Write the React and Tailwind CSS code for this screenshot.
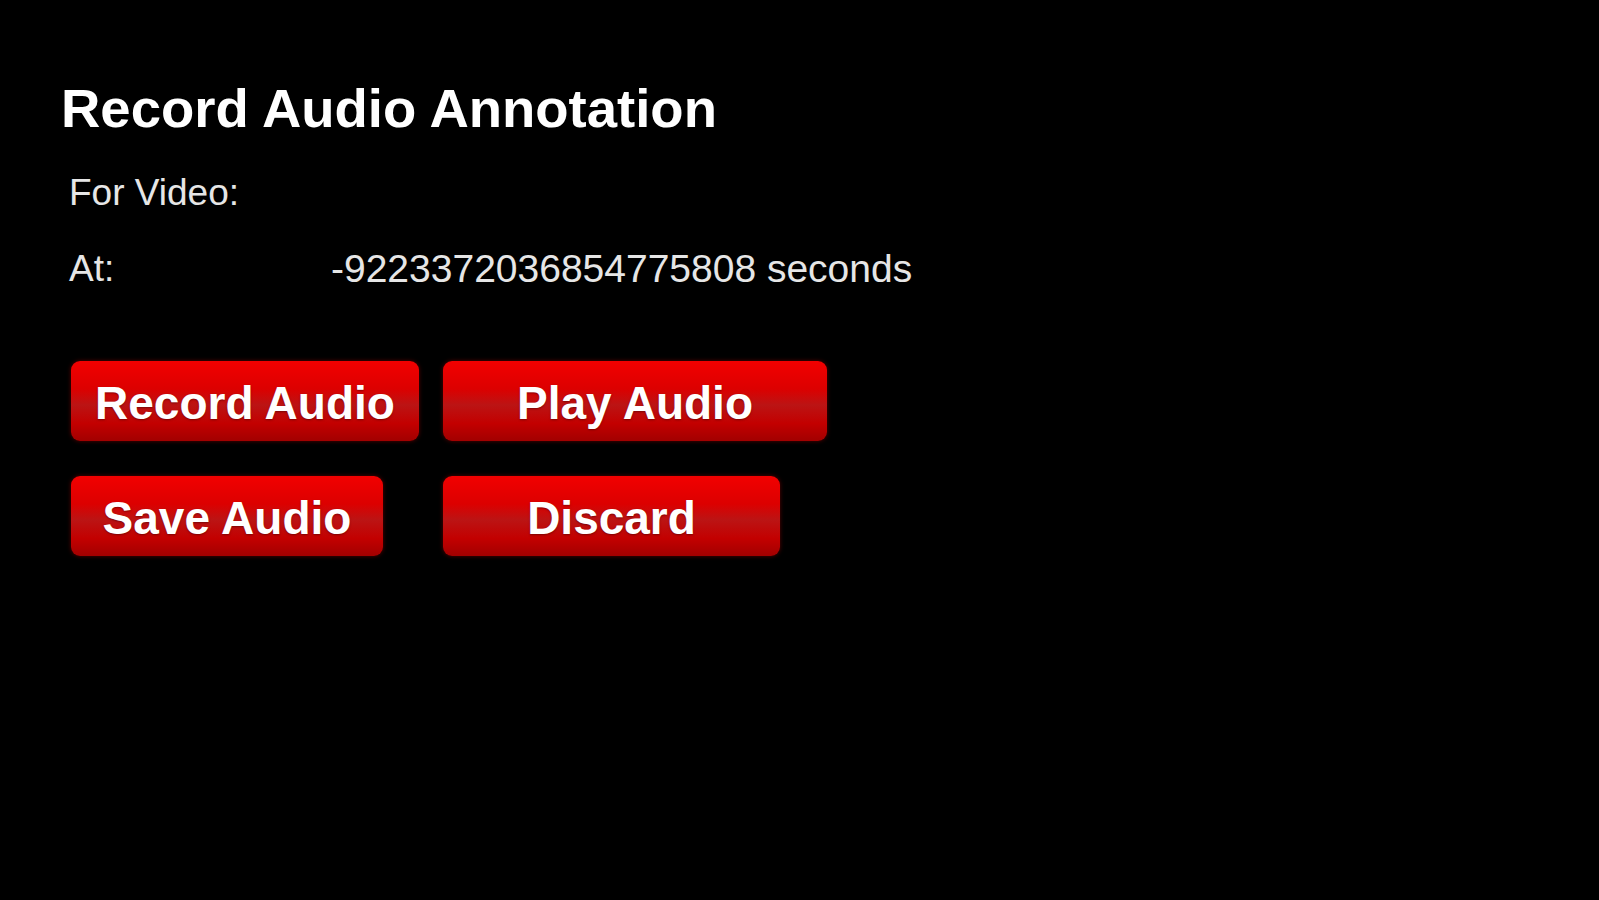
import React from "react";

const RedButton = ({ label, width }) => (
  <button
    className={`h-[80px] pt-[5px] rounded-[9px] text-white font-bold text-[46px] leading-none bg-[linear-gradient(180deg,#f20000_0%,#dc0000_35%,#bb1414_55%,#c30000_78%,#a20000_100%)] shadow-[0_0_4px_rgba(255,0,0,0.35)] [text-shadow:0_1px_2px_rgba(80,0,0,0.6)] ${width}`}
  >
    {label}
  </button>
);

export default function App() {
  return (
    <div className="min-h-[900px] w-full bg-black text-white font-['Liberation_Sans',Arial,sans-serif] pt-[82px] pl-[61px]">
      <h1 className="text-[54.5px] leading-none font-bold">Record Audio Annotation</h1>

      <div className="mt-[37px] pl-[8px] text-[37px] leading-none text-[#e6e6e6]">
        <div className="flex h-[37px] items-center">
          <span className="w-[262px]">For Video:</span>
          <span></span>
        </div>
        <div className="flex h-[37px] items-center mt-[39px]">
          <span className="w-[262px]">At:</span>
          <span className="text-[39px]">-9223372036854775808 seconds</span>
        </div>
      </div>

      <div className="mt-[74px] pl-[10px] grid grid-cols-[372px_auto] gap-y-[35px] justify-items-start">
        <RedButton label="Record Audio" width="w-[348px]" />
        <RedButton label="Play Audio" width="w-[384px]" />
        <RedButton label="Save Audio" width="w-[312px]" />
        <RedButton label="Discard" width="w-[337px]" />
      </div>
    </div>
  );
}
